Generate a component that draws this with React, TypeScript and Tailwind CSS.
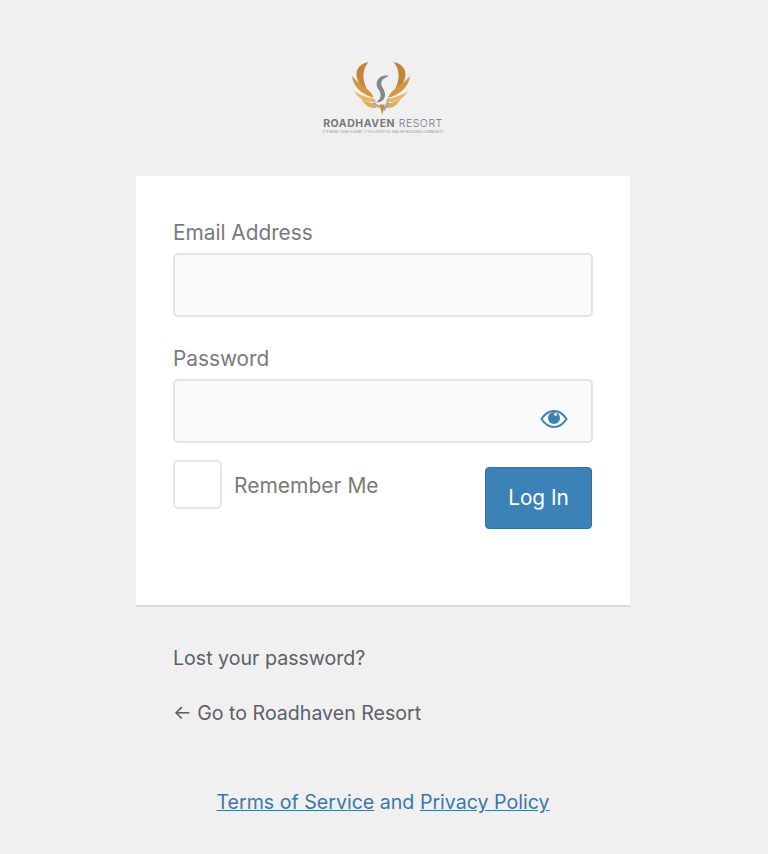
function Wing() {
  return (
    <g>
      <path d="M174 38 C144 44 130 68 144 96 C150 108 158 112 172 124 C160 100 150 70 174 38Z" fill="#c4843a" />
      <path d="M125 80 C128 106 146 132 190 146 C186 122 150 110 125 80Z" fill="#d4963f" />
      <path d="M130 124 C146 152 170 164 198 156 C192 146 180 148 166 142 C154 138 142 134 130 124Z" fill="#e8b868" />
      <path d="M154 150 C164 172 182 180 200 176 L196 160 C182 164 168 160 154 150Z" fill="#e2ac5a" />
    </g>
  );
}

function Logo() {
  return (
    <div className="flex flex-col items-center">
      <svg className="mr-[4px]" width="58" height="53" viewBox="125 38 175 160" aria-hidden="true">
        <Wing />
        <g transform="matrix(-1 0 0 1 425 0)">
          <Wing />
        </g>
        <path d="M200 98 C204 84 220 76 236 80 L222 88 C214 92 212 100 214 108 C220 122 230 132 222 148 C218 156 208 160 198 160 C212 150 216 138 206 122 C200 114 198 106 200 98Z" fill="#84878a" />
        <path d="M186 150 C194 164 204 170 212 170 L216 178 C202 178 190 166 186 150Z" fill="#a3a5a7" />
        <path d="M236 140 C232 158 226 172 218 178 L222 186 C232 176 238 160 236 140Z" fill="#a3a5a7" />
        <path d="M208 166 L224 166 L216 198Z" fill="#d08a2e" />
      </svg>
      <div className="mt-[3px] w-[122px] text-center text-[10.5px] leading-[12px] whitespace-nowrap text-[#77797c] tracking-[0.55px]">
        <span className="font-bold">ROADHAVEN</span> <span className="font-light">RESORT</span>
      </div>
      <div className="mt-[1px] text-[3px] leading-[3px] whitespace-nowrap text-[#8a8a8a] tracking-[0.12px]">
        IT'S MORE THAN A HOME, IT'S A LIFESTYLE AND AN INCLUSIVE COMMUNITY
      </div>
    </div>
  );
}

function Field({ label, children }: { label: string; children?: React.ReactNode }) {
  return (
    <div>
      <label className="block pt-[1px] text-[20.8px] leading-[24px] text-[#767a7e]">{label}</label>
      <div className="relative mt-[8px] h-[64px] rounded-[5px] border-2 border-[#e2e3e4] bg-[#fafafa]">
        {children}
      </div>
    </div>
  );
}

export default function App() {
  return (
    <div className="min-h-[854px] bg-[#f0f0f1] font-['Inter',sans-serif] pt-[62px] pr-[2px] flex flex-col items-center">
      <Logo />
      <main className="mt-[42px] w-[494px] h-[431px] bg-white border-b-2 border-[#d9dadb] px-[37px] pt-[44px]">
        <Field label="Email Address" />
        <div className="mt-[29px]">
          <Field label="Password">
            <svg className="absolute right-[23px] top-[28px]" width="28" height="20" viewBox="0 0 28 20" aria-hidden="true">
              <path d="M1.5 10 C5 4.5 9 2 14 2 C19 2 23 4.5 26.5 10 C23 15.5 19 18 14 18 C9 18 5 15.5 1.5 10Z" fill="none" stroke="#3b82b6" strokeWidth="2" />
              <circle cx="14" cy="9" r="6" fill="#3b82b6" />
              <circle cx="15.5" cy="5.5" r="1.4" fill="#fff" />
            </svg>
          </Field>
        </div>
        <div className="mt-[17px] flex justify-between items-start">
          <div className="flex items-start">
            <div className="w-[49px] h-[49px] rounded-[5px] border-2 border-[#e4e5e6] bg-white" />
            <span className="ml-[12px] mt-[14px] text-[21px] leading-[24px] text-[#7a7a7a]">Remember Me</span>
          </div>
          <button className="mt-[7px] mr-[1px] w-[107px] h-[62px] rounded-[4px] bg-[#3b82b6] border border-[#31709f] text-white text-[20.8px]">
            Log In
          </button>
        </div>
      </main>
      <nav className="w-[494px] px-[37px] pt-[39px] text-[#5b6068] text-[19.6px] leading-[24px]">
        <p>Lost your password?</p>
        <p className="mt-[31px]">← Go to Roadhaven Resort</p>
      </nav>
      <p className="mt-[65px] text-[19.6px] leading-[24px] text-[#3a78aa]">
        <a className="underline" href="#">Terms of Service</a> and <a className="underline" href="#">Privacy Policy</a>
      </p>
    </div>
  );
}
